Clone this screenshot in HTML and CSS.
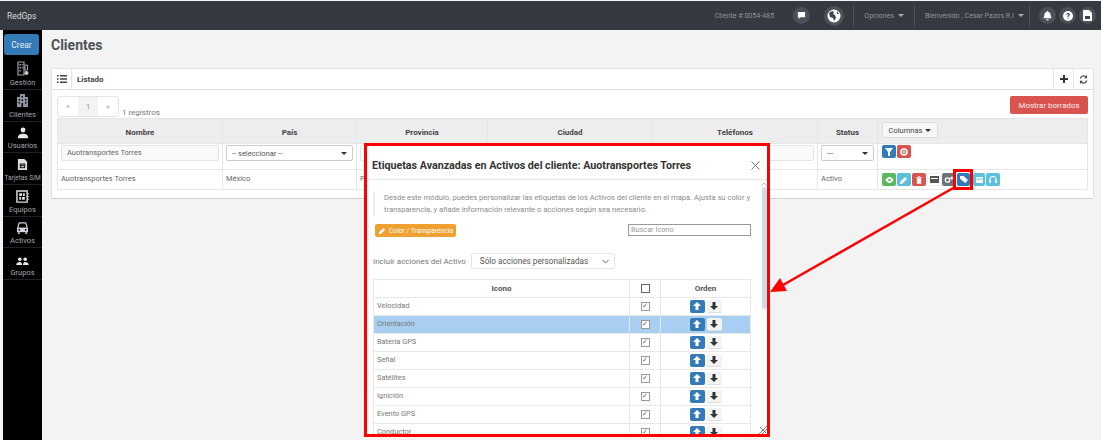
FILE: index.html
```html
<!DOCTYPE html>
<html>
<head>
    <meta charset="utf-8">
    <link rel="stylesheet" href="styles.css">
</head>
<body>
    <div class="topbar">
        <div class="brand">RedGps</div>
        <div class="top-right">
            <span class="client-no">Cliente #:0054-485</span>
            <span class="round round-chat"><svg width="9" height="9" viewBox="0 0 10 10"><path d="M1 1h8v6H4L2 9V7H1z" fill="#fff"/></svg></span>
            <span class="round round-globe"><svg width="14" height="14" viewBox="0 0 14 14"><circle cx="7" cy="7" r="6.5" fill="#fff"/><path d="M2 4l3-2 2 1-1 2 2 1 1 3-2 3-1-3-3-1zM10 2l2 3-2 0z" fill="#3d454d"/></svg></span>
            <span class="top-sep"></span>
            <span class="top-menu menu-opt">Opciones <i class="caret"></i></span>
            <span class="top-sep"></span>
            <span class="top-menu menu-user">Bienvenido , Cesar Pazos R.I <i class="caret"></i></span>
            <span class="top-sep"></span>
            <span class="round"><svg width="9" height="10" viewBox="0 0 10 11"><path d="M5 0a1 1 0 011 1c2 .5 2.500 2 2.500 4l1 3H.5l1-3C1.500 3 2 1.500 4 1a1 1 0 011-1zM3.500 9h3a1.500 1.500 0 01-3 0z" fill="#fff"/></svg></span>
            <span class="round"><svg width="10" height="10" viewBox="0 0 10 10"><circle cx="5" cy="5" r="5" fill="#fff"/><path d="M3.200 3.800C3.300 2.600 4.100 2 5.100 2c1.100 0 1.800.7 1.800 1.500 0 1.300-1.300 1.200-1.300 2.500H4.500c0-1.700 1.200-1.700 1.200-2.400 0-.4-.3-.7-.7-.7-.4 0-.7.3-.8.9zM4.500 6.700h1.100v1.100H4.500z" fill="#3d454d"/></svg></span>
            <span class="round"><svg width="9" height="11" viewBox="0 0 9 11"><path d="M0 11V0h6l3 3v8z" fill="#fff"/><path d="M2 6h5v3H2z" fill="#3d454d"/></svg></span>
        </div>
    </div>

    <div class="layout">
        <div class="sidebar">
            <button class="btn-crear">Crear</button>
            <div class="side-item side-first">
                <svg width="12" height="15" viewBox="0 0 12 15"><path d="M1 1h6v13H1z" fill="none" stroke="#9aa2ac" stroke-width="1.200"/><path d="M8 4h2.500v5H8z" fill="none" stroke="#9aa2ac"/><circle cx="9.500" cy="12" r="2" fill="#c8ccd0"/><path d="M2.500 3H4v1.500H2.500zM2.500 6H4v1.500H2.500zM2.500 9H4v1.500H2.500zM4.800 3h1v1.500h-1zM4.800 6h1v1.500h-1z" fill="#9aa2ac"/></svg>
                <span>Gestión</span>
            </div>
            <div class="side-item">
                <svg width="13" height="15" viewBox="0 0 13 15"><path d="M1 4h3V1h5v3h3v10H1z" fill="#8d96a0"/><path d="M2.500 6H4v1.500H2.500zM5.500 3H7v1.500H5.500zM9 6h1.500v1.500H9zM2.500 9H4v1.500H2.500zM5.500 6.500H7V8H5.500zM9 9h1.500v1.500H9zM5.500 10H7v4H5.500z" fill="#000"/></svg>
                <span>Clientes</span>
            </div>
            <div class="side-item">
                <svg width="12" height="12" viewBox="0 0 14 14"><circle cx="7" cy="3.500" r="2.800" fill="#e8eaec"/><path d="M1 13c0-3.500 2.500-5 6-5s6 1.500 6 5z" fill="#e8eaec"/></svg>
                <span>Usuarios</span>
            </div>
            <div class="side-item">
                <svg width="11" height="13" viewBox="0 0 12 14"><path d="M1 1h7l3 3v9H1z" fill="#dfe2e5"/><path d="M3 6h6v5H3z" fill="#000"/><path d="M4 7h1v1H4zM5.500 7h1v1h-1zM7 7h1v1H7zM4 9h4v1H4z" fill="#dfe2e5"/></svg>
                <span class="small-label">Tarjetas SIM</span>
            </div>
            <div class="side-item">
                <svg width="13" height="13" viewBox="0 0 14 14"><path d="M1 1h11v12H1z" fill="none" stroke="#dfe2e5" stroke-width="1.500"/><path d="M3.500 3.500h3v3h-3zM7.500 3.500h2v3h-2zM3.500 7.500h2v3h-2zM6.500 7.500h3v3h-3z" fill="#dfe2e5"/><path d="M12.500 4h1.500M12.500 7h1.500M12.500 10h1.500" stroke="#dfe2e5"/></svg>
                <span>Equipos</span>
            </div>
            <div class="side-item">
                <svg width="13" height="12" viewBox="0 0 14 13"><path d="M2 6l1-4c.2-.7.7-1 1.300-1h5.400c.6 0 1.100.3 1.300 1l1 4" fill="none" stroke="#cfd3e0" stroke-width="1.300"/><path d="M1 6h12v5H1z" fill="#cfd3e0"/><path d="M2 11h2v2H2zM10 11h2v2h-2z" fill="#cfd3e0"/><circle cx="3.500" cy="8.500" r="1" fill="#000"/><circle cx="10.500" cy="8.500" r="1" fill="#000"/></svg>
                <span>Activos</span>
            </div>
            <div class="side-item">
                <svg width="13" height="9" viewBox="0 0 14 10"><circle cx="4" cy="2.500" r="2" fill="#e8eaec"/><circle cx="10" cy="2.500" r="2" fill="#e8eaec"/><path d="M0 9c0-2.500 2-3.500 4-3.500S6.500 7 6.500 9zM7.500 9c0-2 .8-3.500 2.500-3.500S14 6.500 14 9z" fill="#e8eaec"/></svg>
                <span>Grupos</span>
            </div>
        </div>

        <div class="content">
            <h1 class="page-title">Clientes</h1>

            <div class="panel">
                <div class="panel-head">
                    <span class="head-cell"><svg width="10" height="8" viewBox="0 0 10 8"><path d="M0 0h1.500v1.500H0zM3 0h7v1.500H3zM0 3.200h1.500v1.500H0zM3 3.200h7v1.500H3zM0 6.400h1.500v1.500H0zM3 6.400h7v1.500H3z" fill="#444"/></svg></span>
                    <span class="panel-title">Listado</span>
                    <span class="head-cell head-right"><svg width="8" height="8" viewBox="0 0 8 8"><path d="M3 0h2v3h3v2H5v3H3V5H0V3h3z" fill="#333"/></svg></span>
                    <span class="head-cell head-right"><svg width="9" height="9" viewBox="0 0 10 10"><path d="M1.500 4A3.600 3.600 0 018 2.500M8.500 6A3.600 3.600 0 012 7.500" fill="none" stroke="#444" stroke-width="1.300"/><path d="M9 0v3.500H5.800zM1 10V6.500h3.200z" fill="#444"/></svg></span>
                </div>
                <div class="panel-body">
                    <div class="tools">
                        <div class="pagination"><span>«</span><span class="page-on">1</span><span>»</span></div>
                        <span class="reg-count">1 registros</span>
                        <button class="btn-borrados">Mostrar borrados</button>
                    </div>
                    <table class="grid">
                        <colgroup>
                            <col class="c-nombre"><col class="c-pais"><col class="c-prov"><col class="c-ciudad"><col class="c-tel"><col class="c-status"><col>
                        </colgroup>
                        <tr class="grid-head">
                            <th>Nombre</th><th>País</th><th>Provincia</th><th>Ciudad</th><th>Teléfonos</th><th>Status</th>
                            <th class="th-left"><button class="btn-col">Columnas <i class="caret caret-dark"></i></button></th>
                        </tr>
                        <tr class="grid-filter">
                            <td><div class="fake-input">Auotransportes Torres</div></td>
                            <td><div class="fake-select">-- seleccionar -- <i class="caret caret-dark"></i></div></td>
                            <td><div class="fake-input"></div></td>
                            <td><div class="fake-input"></div></td>
                            <td><div class="fake-input"></div></td>
                            <td><div class="fake-select">--- <i class="caret caret-dark"></i></div></td>
                            <td>
                                <div class="actions">
                                    <span class="act a-blue"><svg width="8" height="8" viewBox="0 0 8 8"><path d="M0 0h8L5 4v4H3V4z" fill="#fff"/></svg></span>
                                    <span class="act a-red"><svg width="8" height="8" viewBox="0 0 8 8"><circle cx="4" cy="4" r="3" fill="none" stroke="#fff" stroke-width="1.500"/><path d="M2.500 2.500l3 3M5.500 2.500l-3 3" stroke="#fff"/></svg></span>
                                </div>
                            </td>
                        </tr>
                        <tr class="grid-row">
                            <td>Auotransportes Torres</td>
                            <td>México</td>
                            <td>Puebla</td>
                            <td></td>
                            <td></td>
                            <td>Activo</td>
                            <td>
                                <div class="actions">
                                    <span class="act a-green"><svg width="9" height="6" viewBox="0 0 10 7"><path d="M0 3.500C2 1 3.500 0 5 0s3 1 5 3.500C8 6 6.500 7 5 7S2 6 0 3.500z" fill="#fff"/><circle cx="5" cy="3.500" r="1.500" fill="#5cb85c"/></svg></span>
                                    <span class="act a-info"><svg width="8" height="8" viewBox="0 0 8 8"><path d="M0 8V6l5-5 2 2-5 5z" fill="#fff"/></svg></span>
                                    <span class="act a-red"><svg width="6" height="8" viewBox="0 0 7 9"><path d="M0 1h2.500V0h2v1H7v1H0zM1 2.500h5V9H1z" fill="#fff"/></svg></span>
                                    <span class="act a-white"><svg width="9" height="7" viewBox="0 0 9 7"><path d="M0 0h9v7H0z" fill="#555"/><path d="M1 2h7v1H1z" fill="#fff"/></svg></span>
                                    <span class="act a-grey"><svg width="10" height="7" viewBox="0 0 10 7"><circle cx="3.500" cy="4" r="2.200" fill="none" stroke="#fff" stroke-width="1.300"/><circle cx="7.800" cy="2" r="1.500" fill="#fff"/></svg></span>
                                    <span class="act-wrap"><span class="act a-blue"><svg width="8" height="7" viewBox="0 0 9 8"><path d="M0 0h4l5 4.500L6 8 0 3z" fill="#fff"/></svg></span></span>
                                    <span class="act a-info act-narrow"><svg width="7" height="6" viewBox="0 0 8 7"><path d="M0 0h8v7H0z" fill="#fff"/><path d="M0 2h8v1H0z" fill="#5bc0de"/></svg></span>
                                    <span class="act a-info"><svg width="8" height="7" viewBox="0 0 9 8"><path d="M1 5V4a3.500 3.500 0 017 0v1" fill="none" stroke="#fff" stroke-width="1.300"/><path d="M0 4.500h2V8H0zM7 4.500h2V8H7z" fill="#fff"/></svg></span>
                                </div>
                            </td>
                        </tr>
                    </table>
                </div>
            </div>
        </div>
    </div>

    <!-- ventana sobre la tabla -->
    <div class="modal">
        <div class="modal-head">
            <span class="modal-title">Etiquetas Avanzadas en Activos del cliente: Auotransportes Torres</span>
            <svg class="modal-close" width="9" height="9" viewBox="0 0 9 9"><path d="M.5.500l8 8M8.500.500l-8 8" stroke="#777" stroke-width="1"/></svg>
        </div>
        <div class="modal-body">
            <div class="scroll-bar">
                <svg width="6" height="4" viewBox="0 0 6 4"><path d="M.5 3.500L3 1l2.500 2.500" fill="none" stroke="#bbb"/></svg>
                <div class="scroll-thumb"></div>
            </div>
            <div class="note">Desde este módulo, puedes personalizar las etiquetas de los Activos del cliente en el mapa. Ajusta su color y transparencia, y añade información relevante o acciones según sea necesario.</div>
            <div class="row-color">
                <button class="btn-color"><svg width="7" height="7" viewBox="0 0 8 8"><path d="M0 8V6l5-5 2 2-5 5z" fill="#fff"/></svg> Color / Transparencia</button>
                <div class="search-box">Buscar Icono</div>
            </div>
            <div class="row-incl">
                <span class="incl-label">Incluir acciones del Activo</span>
                <div class="incl-select">Sólo acciones personalizadas
                    <svg width="7" height="5" viewBox="0 0 7 5"><path d="M.5 1l3 3 3-3" fill="none" stroke="#666"/></svg>
                </div>
            </div>
            <table class="icons">
                <colgroup><col><col class="c-chk"><col class="c-ord"></colgroup>
                <tr class="icons-head"><th>Icono</th><th><span class="chk chk-head"></span></th><th>Orden</th></tr>
                <tr><td>Velocidad</td><td class="cell-c"><span class="chk">✓</span></td><td class="cell-c"><span class="ord"><span class="ord-up"><svg width="8" height="8" viewBox="0 0 8 8"><path d="M4 0l4 4H5.500v4h-3V4H0z" fill="#fff"/></svg></span><span class="ord-down"><svg width="8" height="8" viewBox="0 0 8 8"><path d="M4 8L0 4h2.500V0h3v4H8z" fill="#333"/></svg></span></span></td></tr>
                <tr class="row-sel"><td>Orientación</td><td class="cell-c"><span class="chk">✓</span></td><td class="cell-c"><span class="ord"><span class="ord-up"><svg width="8" height="8" viewBox="0 0 8 8"><path d="M4 0l4 4H5.500v4h-3V4H0z" fill="#fff"/></svg></span><span class="ord-down"><svg width="8" height="8" viewBox="0 0 8 8"><path d="M4 8L0 4h2.500V0h3v4H8z" fill="#333"/></svg></span></span></td></tr>
                <tr><td>Batería GPS</td><td class="cell-c"><span class="chk">✓</span></td><td class="cell-c"><span class="ord"><span class="ord-up"><svg width="8" height="8" viewBox="0 0 8 8"><path d="M4 0l4 4H5.500v4h-3V4H0z" fill="#fff"/></svg></span><span class="ord-down"><svg width="8" height="8" viewBox="0 0 8 8"><path d="M4 8L0 4h2.500V0h3v4H8z" fill="#333"/></svg></span></span></td></tr>
                <tr><td>Señal</td><td class="cell-c"><span class="chk">✓</span></td><td class="cell-c"><span class="ord"><span class="ord-up"><svg width="8" height="8" viewBox="0 0 8 8"><path d="M4 0l4 4H5.500v4h-3V4H0z" fill="#fff"/></svg></span><span class="ord-down"><svg width="8" height="8" viewBox="0 0 8 8"><path d="M4 8L0 4h2.500V0h3v4H8z" fill="#333"/></svg></span></span></td></tr>
                <tr><td>Satélites</td><td class="cell-c"><span class="chk">✓</span></td><td class="cell-c"><span class="ord"><span class="ord-up"><svg width="8" height="8" viewBox="0 0 8 8"><path d="M4 0l4 4H5.500v4h-3V4H0z" fill="#fff"/></svg></span><span class="ord-down"><svg width="8" height="8" viewBox="0 0 8 8"><path d="M4 8L0 4h2.500V0h3v4H8z" fill="#333"/></svg></span></span></td></tr>
                <tr><td>Ignición</td><td class="cell-c"><span class="chk">✓</span></td><td class="cell-c"><span class="ord"><span class="ord-up"><svg width="8" height="8" viewBox="0 0 8 8"><path d="M4 0l4 4H5.500v4h-3V4H0z" fill="#fff"/></svg></span><span class="ord-down"><svg width="8" height="8" viewBox="0 0 8 8"><path d="M4 8L0 4h2.500V0h3v4H8z" fill="#333"/></svg></span></span></td></tr>
                <tr><td>Evento GPS</td><td class="cell-c"><span class="chk">✓</span></td><td class="cell-c"><span class="ord"><span class="ord-up"><svg width="8" height="8" viewBox="0 0 8 8"><path d="M4 0l4 4H5.500v4h-3V4H0z" fill="#fff"/></svg></span><span class="ord-down"><svg width="8" height="8" viewBox="0 0 8 8"><path d="M4 8L0 4h2.500V0h3v4H8z" fill="#333"/></svg></span></span></td></tr>
                <tr><td>Conductor</td><td class="cell-c"><span class="chk">✓</span></td><td class="cell-c"><span class="ord"><span class="ord-up"><svg width="8" height="8" viewBox="0 0 8 8"><path d="M4 0l4 4H5.500v4h-3V4H0z" fill="#fff"/></svg></span><span class="ord-down"><svg width="8" height="8" viewBox="0 0 8 8"><path d="M4 8L0 4h2.500V0h3v4H8z" fill="#333"/></svg></span></span></td></tr>
            </table>
        </div>
        <svg class="modal-grip" width="8" height="8" viewBox="0 0 8 8"><path d="M0 8l8-8M3 8l5-5M1 1l6 6" stroke="#555" stroke-width=".8"/></svg>
    </div>

    <!-- flecha roja -->
    <svg class="arrow" width="1101" height="440" viewBox="0 0 1101 440">
        <path d="M955 187L783 285" fill="none" stroke="#f00" stroke-width="2.500"/>
        <path d="M770 292L780 278 787 291z" fill="#f00"/>
    </svg>
</body>
</html>
```

FILE: styles.css
```css
html, body {
    margin: 0;
    height: 440px;
    overflow: hidden;
}

body {
    position: relative;
    background: #f3f3f3;
    font-family: Roboto, 'Liberation Sans', sans-serif;
    font-size: 7.500px;
    color: #666;
}

.topbar {
    display: flex;
    align-items: center;
    justify-content: space-between;
    height: 29px;
    margin-top: 1px;
    background: #343a40;
    color: #8f959b;
    font-size: 7.100px;
}

.brand {
    padding-left: 7px;
    color: #d8dadc;
    font-size: 8.500px;
}

.top-right {
    display: flex;
    align-items: center;
    padding-right: 5px;
}

.client-no {
    margin-right: 19px;
}

.round {
    display: flex;
    align-items: center;
    justify-content: center;
    width: 17px;
    height: 17px;
    margin-left: 3px;
    border-radius: 50%;
    background: #4a5158;
}

.round-chat {
    margin-left: 0;
    margin-right: 14px;
}

.round-globe {
    width: 20px;
    height: 20px;
    margin-left: 0;
    margin-right: 9px;
}

.top-sep {
    width: 1px;
    height: 20px;
    background: #4a5158;
}

.top-sep + .round {
    margin-left: 9px;
}

.top-menu {
    display: flex;
    align-items: center;
    gap: 4px;
    padding: 0 5px 0 10px;
}

.menu-opt {
    padding-right: 10px;
}

.caret {
    display: inline-block;
    width: 0;
    height: 0;
    border-left: 3px solid transparent;
    border-right: 3px solid transparent;
    border-top: 3px solid #a5abb0;
}

.caret-dark {
    border-top-color: #333;
}

.layout {
    display: flex;
    height: 410px;
}

.sidebar {
    flex: none;
    width: 39px;
    margin-left: 3px;
    background: #000;
    color: #a3a8ad;
}

.btn-crear {
    display: block;
    width: 35px;
    height: 21px;
    margin: 4px 0 2px 1px;
    padding: 0;
    border: none;
    border-radius: 3px;
    background: #337ab7;
    color: #e8eef4;
    font-family: inherit;
    font-size: 8.500px;
}

.side-item {
    display: flex;
    flex-direction: column;
    align-items: center;
    justify-content: flex-end;
    gap: 3px;
    height: 31.700px;
    padding-bottom: 2px;
    box-sizing: border-box;
    border-bottom: 1px solid #1c2226;
    font-size: 7.500px;
    line-height: 8px;
}

.side-first {
    height: 33px;
}

.small-label {
    font-size: 6.500px;
    white-space: nowrap;
}

.content {
    flex: 1;
    min-width: 0;
    padding: 0 7px 0 9px;
}

.page-title {
    margin: 6px 0 0;
    height: 32px;
    color: #4d5359;
    font-size: 14px;
    line-height: 19px;
    font-weight: 700;
}

.panel {
    height: 131px;
    box-sizing: border-box;
    border: 1px solid #e2e2e2;
    border-bottom: 1px solid #d2d2d2;
    border-radius: 2px;
    background: #fff;
}

.panel-head {
    display: flex;
    align-items: center;
    height: 20px;
    border-bottom: 1px solid #ddd;
}

.head-cell {
    display: flex;
    align-items: center;
    justify-content: center;
    width: 19px;
    height: 100%;
    border-right: 1px solid #e6e6e6;
}

.head-right {
    border-right: none;
    border-left: 1px solid #e6e6e6;
}

.panel-title {
    flex: 1;
    padding: 1px 0 0 5px;
    color: #444;
    font-size: 8px;
    font-weight: 700;
}

.panel-body {
    padding: 6px 5px 0;
}

.tools {
    display: flex;
    align-items: flex-end;
    height: 22px;
}

.pagination {
    display: flex;
    align-self: flex-start;
    height: 21px;
    box-sizing: border-box;
    border: 1px solid #e4e4e4;
    border-radius: 3px;
    color: #999;
}

.pagination span {
    display: flex;
    align-items: center;
    justify-content: center;
    width: 20px;
}

.page-on {
    background: #f3f3f3;
}

.reg-count {
    margin-left: 3px;
    font-size: 8px;
    line-height: 10px;
    color: #777;
}

.btn-borrados {
    align-self: flex-start;
    width: 78px;
    height: 18px;
    margin-left: auto;
    padding: 0;
    border: none;
    border-radius: 2px;
    background: #d9534f;
    color: #fbeeee;
    font-family: inherit;
    font-size: 7.900px;
}

.grid {
    width: 100%;
    table-layout: fixed;
    border-collapse: collapse;
    border: 1px solid #e4e4e4;
}

.c-nombre { width: 165px; }
.c-pais { width: 134px; }
.c-prov { width: 131px; }
.c-ciudad { width: 165px; }
.c-tel { width: 165px; }
.c-status { width: 60px; }

.grid th,
.grid td {
    padding: 0 3px;
    border: 1px solid #e6e6e6;
    font-size: 7.500px;
    text-align: left;
}

.grid-head {
    height: 25px;
    background: #ededed;
}

.grid .grid-head th {
    padding-top: 3px;
    box-sizing: border-box;
    color: #444;
    font-size: 8px;
    font-weight: 700;
    text-align: center;
}

.grid .grid-head .th-left {
    text-align: left;
    vertical-align: top;
    padding: 3px 0 0 4px;
}

.btn-col {
    display: inline-flex;
    align-items: center;
    gap: 3px;
    width: 56px;
    height: 16px;
    justify-content: center;
    padding: 0;
    border: 1px solid #ddd;
    border-radius: 2px;
    background: #f7f7f7;
    color: #444;
    font-family: inherit;
    font-size: 7.500px;
}

.grid .grid-filter td {
    height: 26px;
    padding-top: 1px;
    box-sizing: border-box;
    vertical-align: top;
}

.fake-input {
    height: 16px;
    padding-left: 5px;
    box-sizing: border-box;
    border: 1px solid #e4e4e4;
    border-radius: 2px;
    background: #fafafa;
    line-height: 14px;
}

.fake-select {
    display: flex;
    align-items: center;
    justify-content: space-between;
    height: 16px;
    padding: 0 5px;
    box-sizing: border-box;
    border: 1px solid #ccc;
    border-radius: 2px;
    background: #fff;
    color: #555;
}

.grid .grid-row td {
    height: 20px;
    padding-bottom: 2px;
    box-sizing: border-box;
}

.grid .grid-row td:last-child {
    padding-bottom: 0;
}

.actions {
    display: flex;
    gap: 1px;
    margin-left: 1px;
}

.act {
    display: flex;
    align-items: center;
    justify-content: center;
    flex: none;
    width: 14px;
    height: 13px;
    border-radius: 2px;
}

.act-narrow {
    width: 12px;
}

.a-blue { background: #337ab7; }
.a-red { background: #d9534f; }
.a-green { background: #5cb85c; }
.a-info { background: #5bc0de; }
.a-grey { background: #6c757d; }
.a-white { background: #fff; border: 1px solid #eee; box-sizing: border-box; }

/* recuadro rojo del boton de etiquetas */
.act-wrap {
    position: relative;
    display: flex;
    margin: -4px -1px -4px -4px;
    padding: 1px 0 1px 1px;
    border: 3px solid #f00;
    background: #fff;
}

.act-wrap .act {
    width: 13px;
}

.modal {
    position: absolute;
    left: 364px;
    top: 143px;
    width: 406px;
    height: 294px;
    box-sizing: border-box;
    border: 3px solid #f00;
    background: #fff;
    overflow: hidden;
}

.modal-head {
    display: flex;
    align-items: center;
    justify-content: space-between;
    height: 28px;
    padding: 5px 7px 0 5px;
    border-bottom: 1px solid #e5e5e5;
}

.modal-title {
    color: #333;
    font-size: 10.700px;
    font-weight: 700;
    white-space: nowrap;
}

.modal-body {
    position: relative;
    padding: 12px 16px 0 6px;
}

.scroll-bar {
    position: absolute;
    top: 2px;
    right: 0;
    display: flex;
    flex-direction: column;
    align-items: center;
    gap: 1px;
    width: 6px;
}

.scroll-thumb {
    width: 5px;
    height: 122px;
    border-radius: 3px;
    background: #cfdde8;
}

.note {
    height: 24px;
    padding: 0 0 0 9px;
    border-left: 2px solid #eee;
    color: #8a8a8a;
    font-size: 7.600px;
    line-height: 12px;
}

.row-color {
    display: flex;
    align-items: flex-start;
    justify-content: space-between;
    margin-top: 8px;
    padding-left: 2px;
}

.btn-color {
    display: flex;
    align-items: center;
    gap: 3px;
    width: 81px;
    height: 13px;
    padding: 0 0 0 4px;
    border: none;
    border-radius: 2px;
    background: #f0a030;
    color: #fff;
    font-family: inherit;
    font-size: 6.700px;
    white-space: nowrap;
}

.btn-color svg {
    flex: none;
}

.search-box {
    width: 123px;
    height: 12px;
    padding-left: 2px;
    box-sizing: border-box;
    border: 1px solid #999;
    color: #999;
    font-size: 7.300px;
    line-height: 10px;
}

.row-incl {
    display: flex;
    align-items: center;
    gap: 5px;
    margin-top: 16px;
}

.incl-label {
    color: #777;
    font-size: 8px;
    white-space: nowrap;
}

.incl-select {
    display: flex;
    align-items: center;
    justify-content: space-between;
    width: 144px;
    height: 16px;
    padding: 0 5px 0 8px;
    box-sizing: border-box;
    border: 1px solid #e4e4e4;
    border-radius: 2px;
    color: #555;
    font-size: 8.200px;
    white-space: nowrap;
}

.icons {
    width: 378px;
    margin-top: 10px;
    table-layout: fixed;
    border-collapse: collapse;
    border: 1px solid #e8e8e8;
}

.c-chk { width: 31px; }
.c-ord { width: 90px; }

.icons th,
.icons td {
    height: 18px;
    padding: 0 3px;
    box-sizing: border-box;
    border: 1px solid #e8e8e8;
    color: #777;
    font-size: 7.400px;
    text-align: left;
}

.icons td:first-child {
    padding-bottom: 2px;
}

.icons .icons-head th {
    height: 17.500px;
    color: #555;
    font-size: 8px;
    font-weight: 700;
    text-align: center;
}

.icons .cell-c {
    text-align: center;
}

.icons .row-sel td {
    background: #a8cff2;
}

.chk {
    display: inline-block;
    width: 7px;
    height: 7px;
    border: 1px solid #999;
    background: #fff;
    color: #666;
    font-family: 'DejaVu Sans', sans-serif;
    font-size: 7px;
    line-height: 7px;
    vertical-align: middle;
}

.chk-head {
    border-color: #666;
}

.ord {
    display: inline-flex;
    gap: 2px;
    vertical-align: middle;
}

.ord-up,
.ord-down {
    display: flex;
    align-items: center;
    justify-content: center;
    width: 15px;
    height: 13px;
    border-radius: 2px;
    background: #337ab7;
}

.ord-down {
    background: #f3f3f3;
    border-bottom: 1px solid #ddd;
    box-sizing: border-box;
}

.modal-grip {
    position: absolute;
    right: 0;
    bottom: 0;
    background: #fff;
}

.arrow {
    position: absolute;
    left: 0;
    top: 0;
    pointer-events: none;
}
```
